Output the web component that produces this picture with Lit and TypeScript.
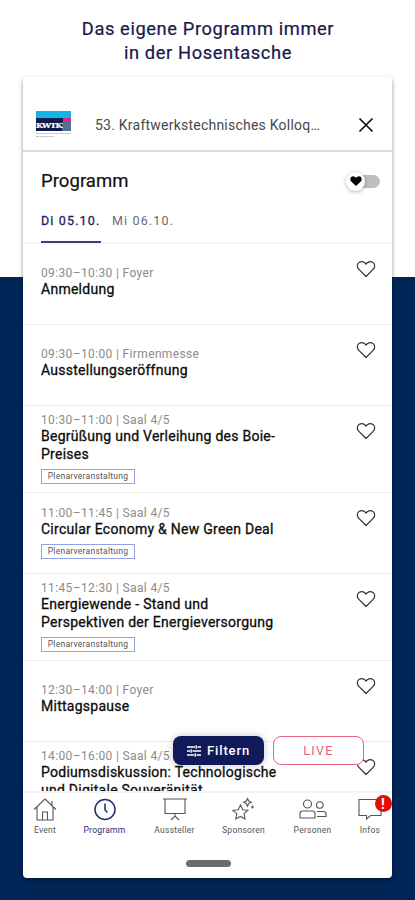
import { LitElement, html, css, svg, nothing } from "lit";
import { customElement } from "lit/decorators.js";
import { classMap } from "lit/directives/class-map.js";

interface Session {
  time: string;
  room: string;
  title: string[];
  tag?: string;
}

const sessions: Session[] = [
  { time: "09:30–10:30", room: "Foyer", title: ["Anmeldung"] },
  { time: "09:30–10:00", room: "Firmenmesse", title: ["Ausstellungseröffnung"] },
  { time: "10:30–11:00", room: "Saal 4/5", title: ["Begrüßung und Verleihung des Boie-", "Preises"], tag: "Plenarveranstaltung" },
  { time: "11:00–11:45", room: "Saal 4/5", title: ["Circular Economy & New Green Deal"], tag: "Plenarveranstaltung" },
  { time: "11:45–12:30", room: "Saal 4/5", title: ["Energiewende - Stand und", "Perspektiven der Energieversorgung"], tag: "Plenarveranstaltung" },
  { time: "12:30–14:00", room: "Foyer", title: ["Mittagspause"] },
  { time: "14:00–16:00", room: "Saal 4/5", title: ["Podiumsdiskussion: Technologische", "und Digitale Souveränität"] },
];

const icons = {
  event: svg`<path d="M3 12.500 14 2l11 10.500M6 10v13h16V10M21 8.500V4M11.500 23v-8h5v8"/>`,
  programm: svg`<circle cx="14" cy="12.500" r="10"/><path d="M14 6.500v6.500l2.500 2.500"/>`,
  aussteller: svg`<path d="M2 2h24M4 2v14.500h20V2M14 16.500v3M10 23l4-4 4 4"/>`,
  sponsoren: svg`<path d="m10.500 8 2.200 4.700 5.200.6-3.900 3.400 1 5.300-4.600-2.500L5.800 22l1-5.300-3.900-3.400 5.300-.6zM17.500 1.500l1.200 2.600 2.600 1.200-2.600 1.200-1.200 2.600-1.200-2.600-2.600-1.200 2.600-1.200z"/><path d="M22.500 8.500v3M21 10h3"/>`,
  personen: svg`<circle cx="8.500" cy="7" r="4"/><path d="M1 21v-4.500Q1 14 3.500 14h10q2.500 0 2.500 2.500V21Z"/><circle cx="20.800" cy="8" r="3.300"/><path d="M18 14.500h6.500q2.500 0 2.500 2.500v2.500H18"/>`,
  infos: svg`<path d="M3 2.500h22v16H14.500L10.500 22v-3.500H3z"/>`,
};

const tabs: { key: keyof typeof icons; label: string }[] = [
  { key: "event", label: "Event" },
  { key: "programm", label: "Programm" },
  { key: "aussteller", label: "Aussteller" },
  { key: "sponsoren", label: "Sponsoren" },
  { key: "personen", label: "Personen" },
  { key: "infos", label: "Infos" },
];

@customElement("app-root")
export class AppRoot extends LitElement {
  static styles = css`
    :host {
      display: flex;
      flex-direction: column;
      align-items: center;
      box-sizing: border-box;
      width: 415px;
      height: 900px;
      padding-top: 17px;
      overflow: hidden;
      background: linear-gradient(#fff 277px, #002557 277px);
      font-family: Roboto, "Liberation Sans", sans-serif;
      color: #111;
    }
    svg { display: block; fill: none; stroke: currentColor; }
    .headline {
      margin: 0 0 12px 1px;
      font-size: 18.3px;
      line-height: 24px;
      font-weight: 400;
      letter-spacing: 0.6px;
      text-align: center;
      color: #171849;
      -webkit-text-stroke: 0.2px;
    }
    .card {
      position: relative;
      display: flex;
      flex-direction: column;
      width: 369px;
      height: 801px;
      border-radius: 4px;
      background: #fff;
      box-shadow: 0 2px 4px rgba(0, 0, 0, 0.42);
    }
    .bar {
      display: flex;
      align-items: center;
      box-sizing: border-box;
      height: 75px;
      padding: 21px 18px 0 13px;
      border-bottom: 2px solid #dedede;
      flex: none;
    }
    .logo { position: relative; width: 35px; height: 29px; }
    .logo-name {
      position: absolute; left: 0; top: 10px; font: 700 8px/10px "DejaVu Serif", serif;
      letter-spacing: -0.7px; color: #fff; -webkit-text-stroke: 0.2px #fff;
    }
    .event { flex: 1; margin-left: 24px; padding-top: 2px; font-size: 14px; letter-spacing: 0.23px; color: #484848; white-space: nowrap; }
    .dots { letter-spacing: -0.7px; }
    .close { margin-top: 2px; }
    .head {
      display: flex;
      justify-content: space-between;
      align-items: center;
      height: 56px;
      padding: 0 12px 0 18px;
      flex: none;
    }
    .head h2 { margin: 0; padding-top: 2px; font-size: 18.5px; font-weight: 400; letter-spacing: 0.05px; -webkit-text-stroke: 0.2px; }
    .toggle { display: flex; align-items: center; width: 32px; height: 13px; border-radius: 7px; background: #bfbfbf; margin-top: 2px; }
    .knob {
      display: grid; place-items: center; flex: none; width: 19px; height: 19px; margin-left: -2px;
      border-radius: 50%; background: #fff; box-shadow: 0 1px 4px rgba(0, 0, 0, 0.3);
    }
    .days { display: flex; gap: 11px; height: 34px; padding-left: 18px; flex: none; border-bottom: 2px solid #f5f5f5; font-size: 12.5px; letter-spacing: 1.15px; line-height: 25px; color: #6b6b6b; }
    .day { box-sizing: border-box; height: 35px; white-space: nowrap; width: 64px; }
    .day.on { width: 60px; color: #1c1f63; border-bottom: 2px solid #3f3f78; -webkit-text-stroke: 0.3px; }
    .list { flex: 1; min-height: 0; overflow: hidden; }
    .row {
      display: flex;
      align-items: center;
      box-sizing: border-box;
      min-height: 81px;
      padding: 6px 16px 8px 18px;
      border-bottom: 1px solid #ececec;
    }
    .row.plain { padding-top: 7px; padding-bottom: 11px; }
    .row.long { align-items: flex-start; }
    .text { flex: 1; }
    .meta { font-size: 12px; line-height: 16px; letter-spacing: 0.36px; color: #8b8b8b; white-space: nowrap; }
    .title { font-size: 14px; line-height: 17.5px; letter-spacing: 0.26px; color: #0c0c0c; -webkit-text-stroke: 0.3px; white-space: nowrap; }
    .tag {
      display: block; box-sizing: border-box; height: 15px; width: 94px; margin-top: 6px;
      border: 1px solid #91a3e6; font-size: 8.5px; line-height: 13px; letter-spacing: 0.26px; text-align: center; color: #555; white-space: nowrap;
    }
    .fav { align-self: flex-start; margin-top: 10px; color: #333; }
    .plain .fav { margin-top: 9px; }
    .nav {
      display: flex;
      box-sizing: border-box;
      flex: none;
      height: 49px;
      padding-top: 4px;
      border-top: 2px solid #f4f4f4;
    }
    .item { display: flex; flex-direction: column; align-items: center; position: relative; flex: none; font-size: 8.5px; line-height: 10px; color: #555; white-space: nowrap; letter-spacing: 0.25px; }
    .item.event-tab { width: 44px; }
    .item.programm { width: 75px; }
    .item.aussteller { width: 65px; }
    .item.sponsoren { width: 73px; }
    .item.personen { width: 65px; }
    .item.infos { width: 47px; margin-left: 1.5px; }
    .item svg { margin-bottom: 3px; }
    .item.on { color: #262b76; }
    .item.on svg { stroke-width: 1.5; }
    .badge {
      position: absolute; top: -2px; right: 2px; display: grid; place-items: center; width: 17px; height: 17px;
      border-radius: 50%; background: #e80b0b; color: #fff; font-size: 14px; font-weight: 700; letter-spacing: 0;
    }
    .home { height: 38px; flex: none; display: flex; justify-content: center; align-items: center; padding: 9px 0 0 2px; box-sizing: border-box; }
    .pill { width: 45px; height: 7px; border-radius: 4px; background: #6b6b6b; }
    .actions { position: absolute; left: 150px; top: 659px; display: flex; gap: 9px; }
    .btn {
      display: flex; align-items: center; justify-content: center; gap: 6px; box-sizing: border-box; width: 91px; height: 29px;
      border-radius: 8px; font-size: 13px; letter-spacing: 0.9px; white-space: nowrap;
    }
    .filter { background: #111a59; color: #fff; font-weight: 500; box-shadow: 0 0 8px rgba(0, 0, 0, 0.22); }
    .live { background: #fff; color: #df607c; border: 1px solid #e8647d; font-size: 12.5px; letter-spacing: 1.3px; }
  `;

  private heart() {
    return html`<svg class="fav" width="20" height="18" viewBox="0 0 20 18" stroke-width="1.2" stroke-linejoin="round">
      <path d="M10 16.500 2.900 9.400C.5 7 1 3.600 3.300 2.300 5.800.9 8.800 1.900 10 4.100c1.200-2.200 4.200-3.200 6.700-1.800C19 3.600 19.500 7 17.100 9.400Z" />
    </svg>`;
  }

  private row(s: Session) {
    const plain = !s.tag && s.title.length === 1;
    return html`<div class=${classMap({ row: true, plain, long: s.title.length > 1 })}>
      <div class="text">
        <div class="meta">${s.time} | ${s.room}</div>
        ${s.title.map((t) => html`<div class="title">${t}</div>`)}
        ${s.tag ? html`<div class="tag">${s.tag}</div>` : nothing}
      </div>
      ${this.heart()}
    </div>`;
  }

  render() {
    return html`
      <h1 class="headline">Das eigene Programm immer<br />in der Hosentasche</h1>
      <div class="card">
        <div class="bar">
          <div class="logo">
            <svg width="35" height="29" viewBox="0 0 35 29">
              <g stroke="none">
                <path fill="#13b5e5" d="M0 1h35v7H0z" />
                <path fill="#101b50" d="M0 8h35v13H0z" />
                <path fill="#56708f" d="M26 12h9v9h-9z" />
                <path fill="#e3208f" d="M27 8h8v4h-8z" />
              </g>
              <path stroke="#8e9dad" stroke-width="1" stroke-dasharray="3 .7 2 .5" d="M0 23.500h35M0 26.500h18" opacity=".6" />
            </svg>
            <span class="logo-name">KWTK</span>
          </div>
          <div class="event">53. Kraftwerkstechnisches Kolloq<span class="dots">...</span></div>
          <svg class="close" width="16" height="16" viewBox="0 0 16 16" stroke-width="1.700"><path d="m1.500 1.500 13 13m0-13-13 13" /></svg>
        </div>
        <div class="head">
          <h2>Programm</h2>
          <div class="toggle">
            <div class="knob">
              <svg width="12" height="10" viewBox="0 0 12 10"><path stroke="none" fill="#050505" d="M6 10 1.200 5.500C-.8 3 .8.300 3 .300q2 0 3 1.500Q7 .300 9 .300c2.200 0 3.800 2.700 1.800 5.200Z" /></svg>
            </div>
          </div>
        </div>
        <div class="days">
          <div class="day on">Di 05.10.</div>
          <div class="day">Mi 06.10.</div>
        </div>
        <div class="list">${sessions.map((s) => this.row(s))}</div>
        <div class="nav">
          ${tabs.map(
            (t) => html`<div class=${classMap({ item: true, on: t.key === "programm", [t.key === "event" ? "event-tab" : t.key]: true })}>
              <svg width="28" height="25" viewBox="0 0 28 25" stroke-width="1.100">${icons[t.key]}</svg>
              ${t.label}
              ${t.key === "infos" ? html`<span class="badge">!</span>` : nothing}
            </div>`
          )}
        </div>
        <div class="home"><div class="pill"></div></div>
        <div class="actions">
          <div class="btn filter">
            <svg width="14" height="12" viewBox="0 0 14 12" stroke-width="1.300"><path d="M0 2h8m2.500 0H14M0 6h3m2.500 0H14M0 10h7m2.500 0H14M9.200.3v3.400M4.200 4.300v3.400M8.200 8.300v3.400" /></svg>
            Filtern
          </div>
          <div class="btn live">LIVE</div>
        </div>
      </div>
    `;
  }
}
